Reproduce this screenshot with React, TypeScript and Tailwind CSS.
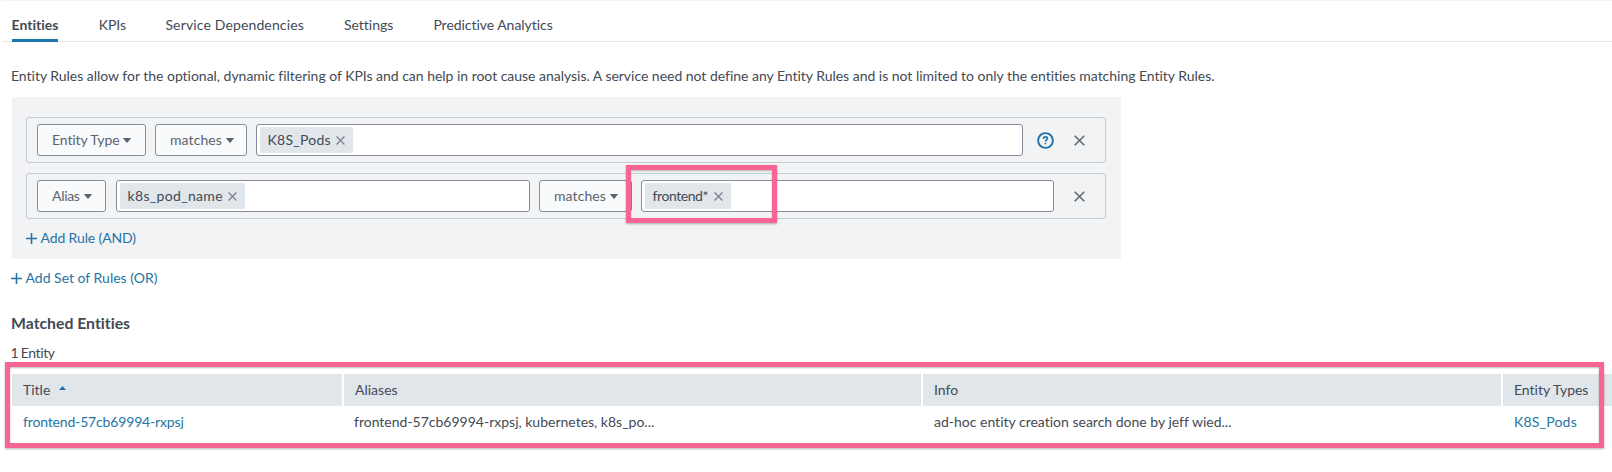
import React from "react";

function Cross({ className }: { className: string }) {
  return (
    <svg className={className} viewBox="0 0 11 11" fill="none" stroke="currentColor" strokeWidth="1.6">
      <path d="M0.7 0.7 10.3 10.3M10.3 0.7 0.7 10.3" />
    </svg>
  );
}

function Plus() {
  return (
    <svg className="h-[11px] w-[11px] shrink-0" viewBox="0 0 11 11" fill="none" stroke="currentColor" strokeWidth="1.6">
      <path d="M5.5 0v11M0 5.5h11" />
    </svg>
  );
}

function Dropdown({ label, className }: { label: string; className: string }) {
  return (
    <button
      className={`flex h-8 shrink-0 items-center rounded-[3px] border border-[#868c9a] bg-[#f9fafb] pl-[14px] text-[#5c6370] ${className}`}
    >
      <span className="-mt-px">{label}</span>
      <svg className="ml-[4px] h-[5px] w-[8px] shrink-0" viewBox="0 0 8 5" fill="currentColor">
        <path d="M0.4 0h7.2q.5 0 .2.5L4.5 4.6q-.5.5-1 0L.2.5Q-.1 0 .4 0Z" />
      </svg>
    </button>
  );
}

function TokenInput({ token, className, textClass }: { token: string; className: string; textClass: string }) {
  return (
    <div className={`flex h-8 shrink-0 items-center rounded-[3px] border border-[#868c9a] bg-white pl-[3px] ${className}`}>
      <span className="flex h-[26px] items-center rounded-[2px] bg-[#e1e6eb] pr-2 pl-[7.5px]">
        <span className={`-mt-px ${textClass}`}>{token}</span>
        <Cross className="ml-[5.5px] h-[9px] w-[9px] text-[#7b828e]" />
      </span>
    </div>
  );
}

function RuleRow({ children }: { children: React.ReactNode }) {
  return (
    <div className="flex h-[46px] w-[1080px] items-center rounded-[3px] border border-[#c6cad3] pl-[10px]">
      {children}
    </div>
  );
}

function Highlight({ className }: { className: string }) {
  return (
    <div
      className={`pointer-events-none absolute border-[5px] border-[#f96592] shadow-[0_1px_2px_rgba(0,0,0,0.3),inset_0_1px_2px_rgba(0,0,0,0.25)] ${className}`}
    />
  );
}

const tabs = [
  { label: "Entities", style: "mr-[40.5px] border-[#1f78ab] font-bold" },
  { label: "KPIs", style: "mr-[39.5px] border-transparent tracking-[-0.1px]" },
  { label: "Service Dependencies", style: "mr-[40px] border-transparent tracking-[0.14px]" },
  { label: "Settings", style: "mr-10 border-transparent" },
  { label: "Predictive Analytics", style: "border-transparent tracking-[-0.04px]" },
];

export default function App() {
  return (
    <div className="relative h-[472px] w-[1612px] overflow-hidden bg-white font-['Lato',sans-serif] text-[14px] leading-5 whitespace-nowrap text-[#434a54] [font-variant-ligatures:none]">
      <nav className="ml-[2px] flex h-[42px] border-t border-b border-t-[#f3f4f5] border-b-[#e3e5e8] pl-[9.5px]">
        {tabs.map((tab) => (
          <a key={tab.label} className={`-mb-px h-[41px] border-b-[3px] pt-[14px] ${tab.style}`}>
            {tab.label}
          </a>
        ))}
      </nav>

      <p className="mt-6 ml-[11px] tracking-[-0.023px]">
        Entity Rules allow for the optional, dynamic filtering of KPIs and can help in root cause analysis. A service
        need not define any Entity Rules and is not limited to only the entities matching Entity Rules.
      </p>

      <section className="mt-[11px] ml-[12px] flex h-[162px] w-[1109px] flex-col gap-[10px] bg-[#f2f3f5] pt-5 pl-[14px]">
        <RuleRow>
          <Dropdown label="Entity Type" className="w-[109px] tracking-[-0.1px]" />
          <Dropdown label="matches" className="ml-[9px] w-[92px] tracking-[0.1px]" />
          <TokenInput token="K8S_Pods" className="ml-[9px] w-[767px]" textClass="tracking-[0.25px]" />
          <svg className="ml-[14px] h-[17px] w-[17px] shrink-0" viewBox="0 0 17 17" fill="none">
            <circle cx="8.5" cy="8.5" r="7.4" stroke="#2272a8" strokeWidth="1.9" />
            <path
              d="M6.5 7V6.7Q6.6 4.9 8.5 4.9 10.4 4.9 10.4 6.5 10.4 7.3 9.4 8 8.5 8.6 8.5 9.6M8.5 10.8V12.3"
              stroke="#2272a8"
              strokeWidth="1.6"
            />
          </svg>
          <Cross className="ml-[20px] h-[11px] w-[11px] text-[#636a77]" />
        </RuleRow>
        <RuleRow>
          <Dropdown label="Alias" className="w-[69px] tracking-[-0.3px]" />
          <TokenInput token="k8s_pod_name" className="ml-[10px] w-[414px]" textClass="tracking-[0.33px]" />
          <Dropdown label="matches" className="ml-[9px] w-[93px] tracking-[0.1px]" />
          <TokenInput token="frontend*" className="ml-[9px] w-[413px]" textClass="tracking-[-0.42px]" />
          <Cross className="ml-[20px] h-[11px] w-[11px] text-[#636a77]" />
        </RuleRow>
        <a className="-mt-px flex items-center gap-[3.5px] text-[#2574a4]">
          <Plus />
          <span className="tracking-[-0.12px]">Add Rule (AND)</span>
        </a>
      </section>

      <a className="mt-[9px] ml-[11px] flex items-center gap-[3.5px] text-[#2574a4]">
        <Plus />
        <span>Add Set of Rules (OR)</span>
      </a>

      <h2 className="mt-[25px] ml-[11px] text-[15.8px] font-bold">Matched Entities</h2>
      <p className="mt-[10px] ml-[10.5px] tracking-[-0.4px] [word-spacing:-0.6px]">1 Entity</p>

      <table className="mt-[11px] ml-[12px] w-[1600px] table-fixed border-collapse text-left">
        <colgroup>
          <col className="w-[331px]" />
          <col className="w-[579px]" />
          <col className="w-[580px]" />
          <col className="w-[110px]" />
        </colgroup>
        <thead>
          <tr className="h-8 bg-[#e1e6ea]">
            <th className="p-0 pb-px pl-[11px] font-normal">
              <span className="flex items-center">
                Title
                <svg className="mb-[4px] ml-[9px] h-[4px] w-[7px]" viewBox="0 0 7 4" fill="#2272a8">
                  <path d="M0 4 3.5 0 7 4Z" />
                </svg>
              </span>
            </th>
            <th className="border-l-2 border-white p-0 pb-px pl-[11px] font-normal">Aliases</th>
            <th className="border-l-2 border-white p-0 pb-px pl-[11px] font-normal">Info</th>
            <th className="border-l-2 border-white p-0 pb-px pl-[11px] font-normal tracking-[-0.02px]">Entity Types</th>
          </tr>
        </thead>
        <tbody>
          <tr className="h-8">
            <td className="p-0 pb-px pl-[11px] tracking-[-0.16px] text-[#2574a4]">frontend-57cb69994-rxpsj</td>
            <td className="p-0 pb-px pl-[11px]">frontend-57cb69994-rxpsj, kubernetes, k8s_po...</td>
            <td className="p-0 pb-px pl-3">ad-hoc entity creation search done by jeff wied...</td>
            <td className="p-0 pb-px pl-3 tracking-[0.2px] text-[#2574a4]">K8S_Pods</td>
          </tr>
        </tbody>
      </table>

      <Highlight className="top-[165px] left-[626px] h-[58px] w-[151px]" />
      <Highlight className="top-[362px] left-[5px] h-[86px] w-[1599px]" />
    </div>
  );
}
